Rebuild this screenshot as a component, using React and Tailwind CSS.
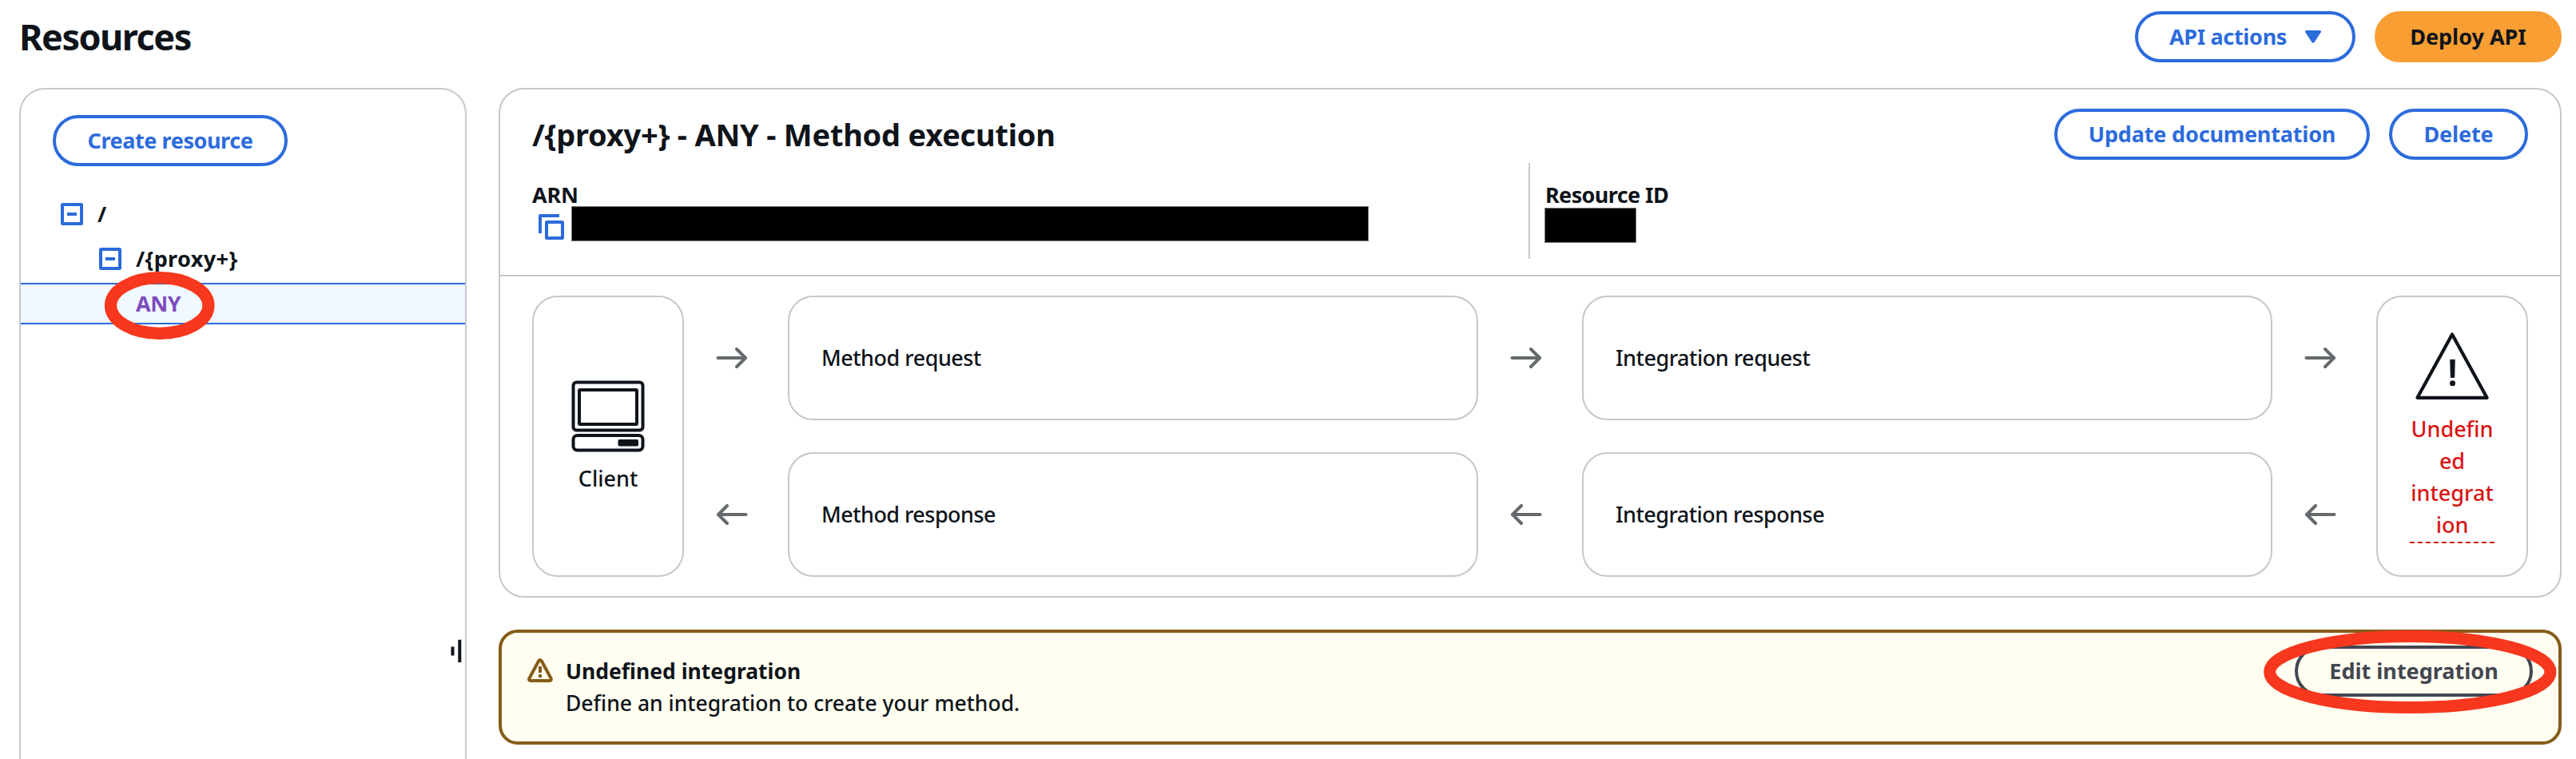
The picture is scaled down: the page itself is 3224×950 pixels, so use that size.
import React from "react";

function Button({ className = "", children }) {
  return (
    <button
      type="button"
      className={`flex h-16 shrink-0 items-center justify-center rounded-[40px] border-4 pb-px text-[27px] leading-10 font-bold whitespace-nowrap ${className}`}
    >
      {children}
    </button>
  );
}

function CollapseIcon() {
  return (
    <svg className="size-7 shrink-0 text-[#2c6bdc]" viewBox="0 0 28 28" fill="none" stroke="currentColor" strokeWidth="4">
      <rect x="2" y="2" width="24" height="24" rx="0.5" />
      <path d="M8 14h12" />
    </svg>
  );
}

function CopyIcon() {
  return (
    <svg className="mt-2.5 ml-2 size-8 shrink-0 text-[#2c6bdc]" viewBox="0 0 32 32" fill="none" stroke="currentColor" strokeWidth="4">
      <path d="M26 2H2v22" strokeLinejoin="round" />
      <rect x="10" y="10" width="20" height="20" rx="0.5" />
    </svg>
  );
}

function Arrow({ left = false }) {
  return (
    <div className="flex items-center pl-10">
      <svg
        className={`h-[26px] w-10 text-[#656a6c] ${left ? "-scale-x-100" : ""}`}
        viewBox="0 0 40 26"
        fill="none"
        stroke="currentColor"
        strokeWidth="4"
        strokeLinecap="round"
        strokeLinejoin="round"
      >
        <path d="M2.5 13H37" />
        <path d="M26 2l11 11-11 11" />
      </svg>
    </div>
  );
}

function Stage({ className = "", children }) {
  return (
    <div className={`flex items-center rounded-[32px] border-2 border-[#c6c6cd] pb-px pl-10 text-[27px] leading-10 font-medium ${className}`}>
      {children}
    </div>
  );
}

function ComputerIcon() {
  return (
    <svg className="h-[90px] w-[92px] text-[#0f141a]" viewBox="0 0 92 90" fill="none" stroke="currentColor" strokeWidth="4">
      <rect x="2.5" y="2.5" width="87" height="60" rx="4" />
      <rect x="10" y="12" width="72" height="43" rx="1" />
      <rect x="2.5" y="69" width="87" height="18.500" rx="5" />
      <rect x="58.500" y="74" width="25.500" height="8.500" rx="2" fill="currentColor" stroke="none" />
    </svg>
  );
}

function TriangleIcon() {
  return (
    <svg className="h-[84px] w-[92px] text-[#0f141a]" viewBox="0 0 92 84" fill="none">
      <path d="M46 2.500 89.500 81.800h-87z" stroke="currentColor" strokeWidth="4.200" strokeLinejoin="round" />
      <path d="M43.700 34.200h5.600l-.5 22.200h-4.600z" fill="currentColor" stroke="currentColor" strokeWidth="0.8" strokeLinejoin="round" />
      <circle cx="46.500" cy="63.800" r="3.500" fill="currentColor" />
    </svg>
  );
}

function Sidebar() {
  return (
    <aside className="relative w-[560px] shrink-0 rounded-t-[32px] border-2 border-b-0 border-[#c6c6cd] pt-8">
      <div className="pl-10">
        <Button className="w-[294px] border-[#2c6bdc] tracking-[-0.43px] text-[#2c6bdc]">Create resource</Button>
      </div>
      <ul className="mt-8 text-[27px] leading-10 font-bold">
        <li className="flex h-14 items-center gap-[18px] pl-[50px]">
          <CollapseIcon />
          <span>/</span>
        </li>
        <li className="flex h-14 items-center gap-[18px] pl-[98px]">
          <CollapseIcon />
          <span className="tracking-[0.4px]">{"/{proxy+}"}</span>
        </li>
        <li className="relative mt-0.5 flex h-[52px] items-center border-y-2 border-[#2c6bdc] bg-[#f0f9ff] pb-px pl-36 tracking-[-0.5px] text-[#7d4bbd]">
          <span>ANY</span>
          <svg className="absolute top-[-16px] left-[105px] h-[85px] w-[138px]" viewBox="0 0 138 85" fill="none">
            <ellipse cx="68.700" cy="42.500" rx="61.200" ry="34.800" stroke="#f7371e" strokeWidth="15.200" />
          </svg>
        </li>
      </ul>
      <svg className="absolute top-[688px] right-1 h-[30px] w-[15px]" viewBox="0 0 15 30" fill="#0f141a">
        <rect x="1.500" y="9.500" width="4" height="11" />
        <rect x="10.300" y="0.7" width="4" height="28.300" />
      </svg>
    </aside>
  );
}

function MethodPanel() {
  return (
    <section className="h-[638px] rounded-[32px] border-2 border-[#c6c6cd]">
      <div className="h-[234px] border-b-2 border-[#c6c6cd] px-10 pt-6">
        <div className="flex items-center justify-between">
          <h2 className="text-[38px] leading-[48px] font-bold tracking-[-0.24px]">{"/{proxy+} - ANY - Method execution"}</h2>
          <div className="flex gap-6">
            <Button className="w-[395px] border-[#2c6bdc] tracking-[-0.18px] text-[#2c6bdc]">Update documentation</Button>
            <Button className="w-[174px] border-[#2c6bdc] tracking-[-0.15px] text-[#2c6bdc]">Delete</Button>
          </div>
        </div>
        <div className="mt-1 flex h-[120px]">
          <div className="w-[1247px] pt-[23px]">
            <div className="text-[27px] leading-[34px] font-bold tracking-[-0.2px]">ARN</div>
            <div className="-mt-[3px] flex items-start">
              <CopyIcon />
              <div className="ml-[9px] h-11 w-[998px] border border-[#777] bg-black" />
            </div>
          </div>
          <div className="border-l-2 border-[#c6c6cd] pt-[23px] pl-[19px]">
            <div className="text-[27px] leading-[34px] font-bold tracking-[-0.6px]">Resource ID</div>
            <div className="-mt-px -ml-px h-11 w-[115px] border border-[#777] bg-black" />
          </div>
        </div>
      </div>
      <div className="grid grid-cols-[190px_130px_864px_130px_864px_130px_190px] grid-rows-[156px_156px] gap-y-10 px-10 pt-6">
        <div className="row-span-2 flex flex-col items-center rounded-[32px] border-2 border-[#c6c6cd] pt-[104px] text-[27px] leading-10 font-medium">
          <ComputerIcon />
          <span className="mt-[13px]">Client</span>
        </div>
        <Arrow />
        <Stage className="tracking-[-0.5px]">Method request</Stage>
        <Arrow />
        <Stage className="tracking-[-0.48px]">Integration request</Stage>
        <Arrow />
        <div className="row-span-2 flex flex-col items-center rounded-[32px] border-2 border-[#c6c6cd] pt-11 text-[27px] leading-10 font-medium text-[#d91515]">
          <TriangleIcon />
          <div className="mt-[17px] w-[106px] text-center">
            <span className="block">Undefin</span>
            <span className="block">ed</span>
            <span className="block">integrat</span>
            <span className="block">ion</span>
            <div className="mt-px h-0.5 bg-[repeating-linear-gradient(90deg,#d91515_0_6px,transparent_6px_10px)]" />
          </div>
        </div>
        <Arrow left />
        <Stage className="tracking-[-0.54px]">Method response</Stage>
        <Arrow left />
        <Stage className="tracking-[-0.53px]">Integration response</Stage>
        <Arrow left />
      </div>
    </section>
  );
}

function Alert() {
  return (
    <section className="mt-10 flex h-36 items-start rounded-3xl border-4 border-[#855c17] bg-[#fffef0] pr-8 pl-8">
      <svg className="mt-8 h-[30px] w-8 shrink-0" viewBox="0 0 32 30" fill="none" stroke="#855c17" strokeWidth="4">
        <path d="M14.200 3.200 2.300 25.200Q1.600 28 4 28H28Q30.400 28 29.700 25.200L17.800 3.200Q16 1 14.200 3.200Z" strokeLinejoin="round" />
        <path d="M16 10v8M16 20v4" />
      </svg>
      <div className="mt-7 ml-4 flex-1 text-[26.5px] leading-10">
        <div className="font-bold">Undefined integration</div>
        <div className="font-medium">Define an integration to create your method.</div>
      </div>
      <div className="relative mt-4">
        <Button className="w-[298px] border-[#424650] text-[#424650]">Edit integration</Button>
        <svg className="absolute top-[-19px] left-[-39px] h-[104px] w-[367px] max-w-none" viewBox="0 0 367 104" fill="none">
          <ellipse cx="183.300" cy="52" rx="175.700" ry="44.500" stroke="#f7371e" strokeWidth="15" />
        </svg>
      </div>
    </section>
  );
}

export default function App() {
  return (
    <div className="flex h-[950px] w-[3224px] flex-col overflow-hidden bg-white pt-3.5 pr-[18px] pl-6 font-['Noto_Sans','Open_Sans',sans-serif] text-[#0f141a]">
      <header className="flex h-16 shrink-0 items-center justify-between">
        <h1 className="text-[45px] leading-[60px] font-bold tracking-[-1.5px]">Resources</h1>
        <div className="flex gap-6">
          <Button className="w-[276px] gap-[23px] border-[#2c6bdc] tracking-[-0.33px] text-[#2c6bdc]">
            API actions
            <svg className="h-4 w-5" viewBox="0 0 20 16" fill="currentColor">
              <path d="M1.500 0h17q2 .6 1.200 2.500L11.500 15q-1.500 1.600-3 0L.3 2.500Q-.5.6 1.500 0z" />
            </svg>
          </Button>
          <Button className="w-[234px] border-[#f99e33] bg-[#f99e33]">Deploy API</Button>
        </div>
      </header>
      <main className="mt-8 flex flex-1 gap-10">
        <Sidebar />
        <div className="w-[2582px]">
          <MethodPanel />
          <Alert />
        </div>
      </main>
    </div>
  );
}
